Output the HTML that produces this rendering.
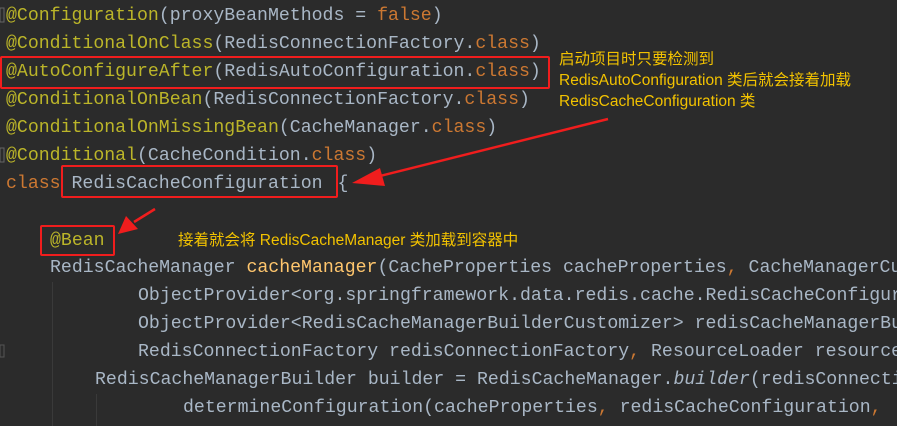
<!DOCTYPE html>
<html><head><meta charset="utf-8"><style>
body{margin:0;width:897px;height:426px;background:#2b2b2b;overflow:hidden;position:relative;font-family:"Liberation Mono",monospace;}
#w{position:absolute;left:0;top:0;width:897px;height:426px;overflow:hidden;}
.l{position:absolute;white-space:pre;color:#a9b7c6;line-height:28px;height:28px;font-size:18.2px;}
.t{left:6px;}
.a{color:#bbb529}.k{color:#cc7832}.m{color:#ffc66d}.i{font-style:italic}
.box{position:absolute;border:2px solid #f01d1d;border-radius:2px;box-sizing:border-box;}
.cn{position:absolute;color:#f2c200;font-family:"Liberation Sans","Noto Sans CJK SC",sans-serif;font-size:15.5px;white-space:pre;line-height:20px;}
.g{position:absolute;width:1px;background:#3a3a3a;}
</style></head><body><div id="w">
<div class="l t" style="top:2px"><span class="a">@Configuration</span>(proxyBeanMethods = <span class="k">false</span>)</div>
<div class="l t" style="top:30px"><span class="a">@ConditionalOnClass</span>(RedisConnectionFactory.<span class="k">class</span>)</div>
<div class="l t" style="top:58px"><span class="a">@AutoConfigureAfter</span>(RedisAutoConfiguration.<span class="k">class</span>)</div>
<div class="l t" style="top:86px"><span class="a">@ConditionalOnBean</span>(RedisConnectionFactory.<span class="k">class</span>)</div>
<div class="l t" style="top:114px"><span class="a">@ConditionalOnMissingBean</span>(CacheManager.<span class="k">class</span>)</div>
<div class="l t" style="top:142px"><span class="a">@Conditional</span>(CacheCondition.<span class="k">class</span>)</div>
<div class="l t" style="top:170px"><span class="k">class</span> RedisCacheConfiguration <span style="margin-left:4px">{</span></div>

<div class="g" style="left:52px;top:282px;height:144px"></div>
<div class="g" style="left:96px;top:394px;height:32px"></div>

<div class="l" style="top:227px;left:50px"><span class="a">@Bean</span></div>
<div class="l" style="top:254px;left:50px">RedisCacheManager <span class="m">cacheManager</span>(CacheProperties cacheProperties<span class="k">,</span> CacheManagerCustomizers</div>
<div class="l" style="top:282px;left:138px">ObjectProvider&lt;org.springframework.data.redis.cache.RedisCacheConfiguration&gt;</div>
<div class="l" style="top:310px;left:138px">ObjectProvider&lt;RedisCacheManagerBuilderCustomizer&gt; redisCacheManagerBuilder</div>
<div class="l" style="top:338px;left:138px">RedisConnectionFactory redisConnectionFactory<span class="k">,</span> ResourceLoader resourceLoader</div>
<div class="l" style="top:366px;left:95px">RedisCacheManagerBuilder builder = RedisCacheManager.<span class="i">builder</span>(redisConnectionFactory)</div>
<div class="l" style="top:394px;left:183px">determineConfiguration(cacheProperties<span class="k">,</span> redisCacheConfiguration<span class="k">,</span></div>

<div class="box" style="left:0;top:56px;width:550px;height:33px"></div>
<div class="box" style="left:61px;top:165px;width:277px;height:33px"></div>
<div class="box" style="left:40px;top:225px;width:75px;height:31px"></div>

<div class="cn" style="left:559px;top:50px">启动项目时只要检测到</div>
<div class="cn" style="left:559px;top:71px">RedisAutoConfiguration 类后就会接着加载</div>
<div class="cn" style="left:559px;top:92px">RedisCacheConfiguration 类</div>
<div class="cn" style="left:178px;top:231px">接着就会将 RedisCacheManager 类加载到容器中</div>

<svg style="position:absolute;left:0;top:0" width="897" height="426">
<line x1="608" y1="119" x2="372" y2="178" stroke="#f01d1d" stroke-width="2.5"/>
<polygon points="352,183 380,168 385,186" fill="#f01d1d"/>
<line x1="155" y1="209" x2="134" y2="222" stroke="#f01d1d" stroke-width="2.5"/>
<polygon points="118,234 126,216 138,229" fill="#f01d1d"/>
<rect x="0" y="8" width="4" height="14" fill="none" stroke="#666" stroke-width="1"/>
<rect x="0" y="148" width="4" height="14" fill="none" stroke="#666" stroke-width="1"/>
<rect x="0" y="345" width="4" height="12" fill="none" stroke="#555" stroke-width="1"/>
</svg>
</div></body></html>
